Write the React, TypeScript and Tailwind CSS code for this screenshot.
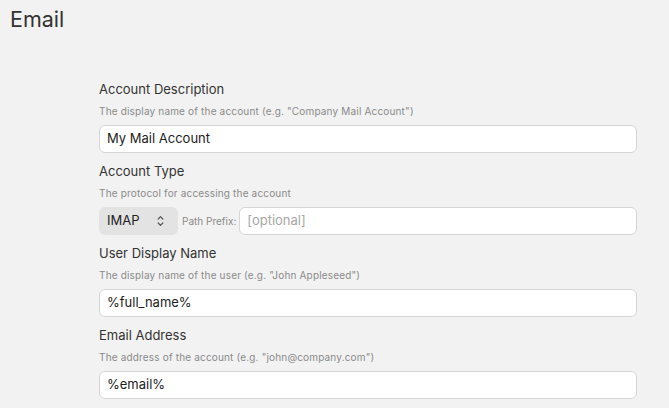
import React from "react";

const font = { fontFamily: "Inter, 'Noto Sans', sans-serif" };

function Label({ title, help }: { title: string; help: string }) {
  return (
    <>
      <div className="text-[13px] leading-[20px] text-[#333333]">{title}</div>
      <div className="mt-[5px] text-[10px] leading-[14px] tracking-[0.17px] text-[#8a8a8a]">{help}</div>
    </>
  );
}

function TextInput({ value, placeholder }: { value?: string; placeholder?: string }) {
  return (
    <div className="flex h-[28px] flex-1 items-center rounded-[6px] border border-[#d6d6d6] bg-white px-[7px] text-[13px]">
      {value ? (
        <span className="text-[#222222]">{value}</span>
      ) : (
        <span className="text-[#a6a6a6]">{placeholder}</span>
      )}
    </div>
  );
}

function Chevrons() {
  return (
    <svg width="7" height="12" viewBox="0 0 7 12" fill="none" stroke="#555" strokeWidth="1.2" strokeLinecap="round" strokeLinejoin="round">
      <path d="M1.2 4 L3.5 1.6 L5.8 4" />
      <path d="M1.2 8 L3.5 10.4 L5.8 8" />
    </svg>
  );
}

export default function App() {
  return (
    <div className="min-h-[408px] w-full bg-[#f2f2f2]" style={font}>
      <div className="pl-[10px] pt-[5px] text-[21.5px] leading-[28px] text-[#333333]">Email</div>
      <div className="ml-[99px] mt-[46px] w-[538px]">
        <div>
          <Label title="Account Description" help={'The display name of the account (e.g. "Company Mail Account")'} />
          <div className="mt-[7px] flex">
            <TextInput value="My Mail Account" />
          </div>
        </div>
        <div className="mt-[8px]">
          <Label title="Account Type" help="The protocol for accessing the account" />
          <div className="mt-[7px] flex items-center">
            <div className="flex h-[28px] w-[79px] items-center justify-between rounded-[6px] bg-[#e3e3e3] pl-[8px] pr-[14px] text-[13px] text-[#222222]">
              <span>IMAP</span>
              <Chevrons />
            </div>
            <span className="ml-[4px] mr-[3px] text-[10px] text-[#8a8a8a]">Path Prefix:</span>
            <TextInput placeholder="[optional]" />
          </div>
        </div>
        <div className="mt-[8px]">
          <Label title="User Display Name" help={'The display name of the user (e.g. "John Appleseed")'} />
          <div className="mt-[7px] flex">
            <TextInput value="%full_name%" />
          </div>
        </div>
        <div className="mt-[8px]">
          <Label title="Email Address" help={'The address of the account (e.g. "john@company.com")'} />
          <div className="mt-[7px] flex">
            <TextInput value="%email%" />
          </div>
        </div>
      </div>
    </div>
  );
}
